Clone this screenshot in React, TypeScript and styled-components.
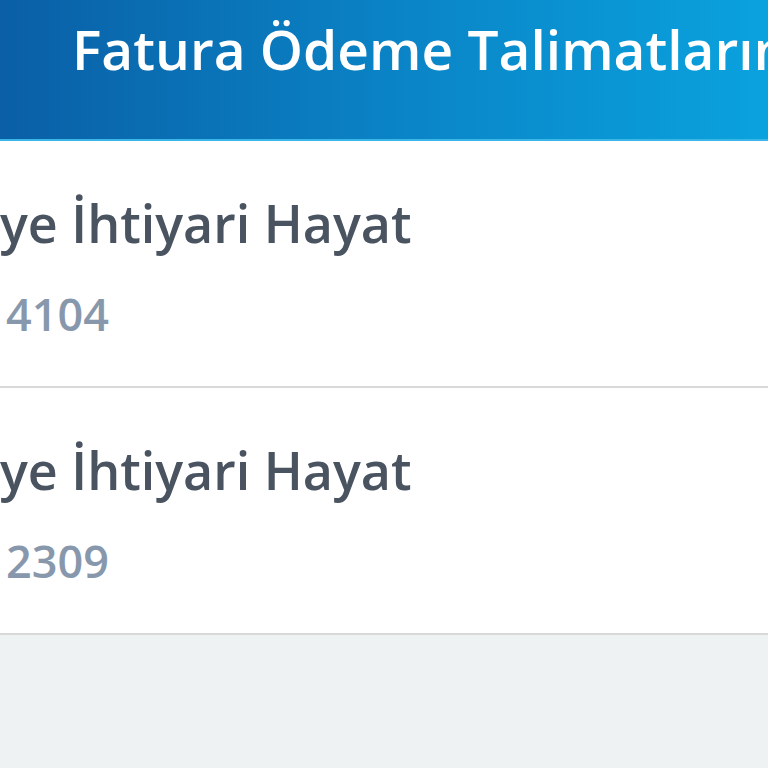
import React from 'react';
import styled, { createGlobalStyle } from 'styled-components';

const GlobalStyle = createGlobalStyle`
  html, body {
    margin: 0;
    padding: 0;
    background: #eef2f3;
    font-family: "Open Sans", "Noto Sans", sans-serif;
  }
`;

const items = [
  { name: 'ye İhtiyari Hayat', no: '4104' },
  { name: 'ye İhtiyari Hayat', no: '2309' },
];

const App = () => {
  return (
    <Page>
      <GlobalStyle />
      <Header>
        <Title>Fatura Ödeme Talimatlarım</Title>
      </Header>
      <List>
        {items.map((item, i) => (
          <Row key={i}>
            <Name>{item.name}</Name>
            <Number>{item.no}</Number>
          </Row>
        ))}
      </List>
    </Page>
  );
};

const Page = styled.div`
  width: 768px;
  height: 768px;
  overflow: hidden;
  background: #eef2f3;
`;
const Header = styled.header`
  height: 139px;
  display: flex;
  align-items: flex-start;
  padding-left: 72px;
  background: linear-gradient(to right, #0a5fa6 0%, #0a86c8 55%, #0aa2de 100%);
  border-bottom: 2px solid #3ab6e8;
  overflow: hidden;
`;
const Title = styled.h1`
  margin: 0;
  padding-top: 9px;
  color: #fff;
  font-size: 55px;
  font-weight: 600;
  line-height: 80px;
  white-space: nowrap;
`;
const List = styled.div`
  display: flex;
  flex-direction: column;
  background: #fff;
`;
const Row = styled.div`
  height: 247px;
  display: flex;
  flex-direction: column;
  padding-top: 52px;
  box-sizing: border-box;
  border-bottom: 2px solid #d8d8d8;
  overflow: hidden;
`;
const Name = styled.div`
  color: #4a5360;
  font-size: 52px;
  font-weight: 600;
  line-height: 60px;
  white-space: nowrap;
`;
const Number = styled.div`
  margin-top: 36px;
  margin-left: 6px;
  color: #8898ac;
  font-size: 45px;
  font-weight: 600;
  line-height: 50px;
  white-space: nowrap;
`;

export default App;
